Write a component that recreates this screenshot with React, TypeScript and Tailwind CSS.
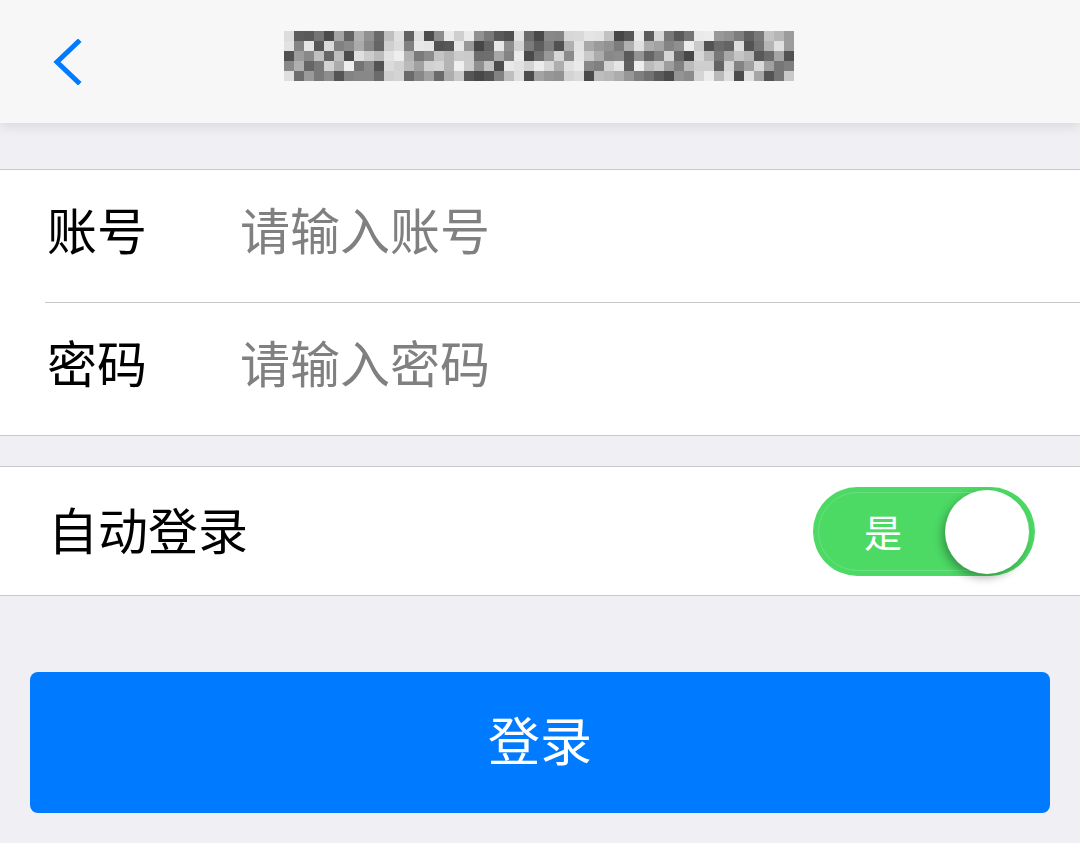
import React from 'react';

const font = { fontFamily: '"Noto Sans CJK SC", "Noto Sans", sans-serif' };

// the title in the shot is pixelated, so draw it as a mosaic of grey cells
const Mosaic = () => {
  const cols = 51;
  const rows = 5;
  let seed = 17;
  const rand = () => {
    seed = (seed * 9301 + 49297) % 233280;
    return seed / 233280;
  };
  const cells: { x: number; y: number; g: number }[] = [];
  for (let c = 0; c < cols; c++) {
    const gap = c % 6 === 5 && rand() > 0.3;
    for (let r = 0; r < rows; r++) {
      const g = gap ? 200 + Math.floor(rand() * 40) : 70 + Math.floor(rand() * 170);
      cells.push({ x: c * 10, y: r * 10, g });
    }
  }
  return (
    <svg width={510} height={50} viewBox="0 0 510 50">
      {cells.map((cell, i) => (
        <rect key={i} x={cell.x} y={cell.y} width={10} height={10} fill={`rgb(${cell.g},${cell.g},${cell.g})`} />
      ))}
    </svg>
  );
};

const Field = ({ label, placeholder }: { label: string; placeholder: string }) => (
  <div className="flex h-[132px] items-center pb-[16px] pl-[47px]">
    <span className="w-[193px] text-[50px] leading-none text-black">{label}</span>
    <span className="text-[50px] leading-none text-[#808080]">{placeholder}</span>
  </div>
);

const App = () => {
  return (
    <div className="flex h-[843px] w-[1080px] flex-col overflow-hidden bg-[#efeff4]" style={font}>
      <header className="relative z-10 flex h-[123px] items-center bg-[#f7f7f7] shadow-[0_3px_12px_rgba(0,0,0,0.1)]">
        <svg className="ml-[52px] shrink-0" width="30" height="46" viewBox="0 0 30 46">
          <polyline points="26,3 5,23 26,43" fill="none" stroke="#007aff" strokeWidth="5" strokeLinecap="square" />
        </svg>
        <div className="ml-[202px] -mt-[12px]">
          <Mosaic />
        </div>
      </header>

      <div className="mt-[46px] border-y border-[#c8c7cc] bg-white">
        <Field label="账号" placeholder="请输入账号" />
        <div className="ml-[45px] border-t border-[#c8c7cc]" />
        <Field label="密码" placeholder="请输入密码" />
      </div>

      <div className="mt-[30px] flex h-[130px] items-center justify-between border-y border-[#c8c7cc] bg-white pl-[48px] pr-[45px]">
        <span className="pb-[6px] text-[50px] leading-none text-black">自动登录</span>
        <div className="relative flex h-[89px] w-[222px] items-center rounded-full bg-[#4cd964]">
          <div className="absolute inset-[5px] rounded-full border border-[#7ee595]/60" />
          <span className="ml-[51px] text-[38px] leading-none text-white">是</span>
          <div className="absolute right-[6px] top-[3px] h-[84px] w-[84px] rounded-full bg-white shadow-[-3px_4px_8px_rgba(0,0,0,0.3)]" />
        </div>
      </div>

      <button className="mx-[30px] mt-[76px] flex h-[141px] items-center justify-center rounded-[8px] bg-[#007aff] pb-[8px] text-[52px] leading-none text-white">
        登录
      </button>
    </div>
  );
};

export default App;
